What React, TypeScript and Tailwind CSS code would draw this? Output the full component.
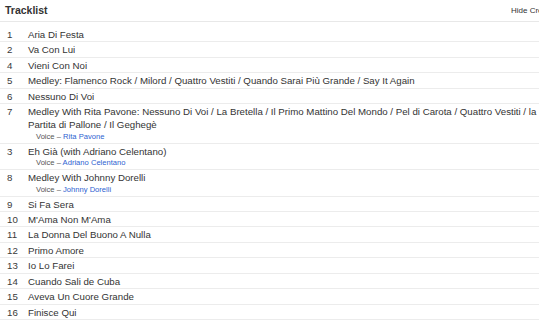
import React from "react";

type Track = { n: string; title: string; voice?: string };

const tracks: Track[] = [
  { n: "1", title: "Aria Di Festa" },
  { n: "2", title: "Va Con Lui" },
  { n: "4", title: "Vieni Con Noi" },
  { n: "5", title: "Medley: Flamenco Rock / Milord / Quattro Vestiti / Quando Sarai Più Grande / Say It Again" },
  { n: "6", title: "Nessuno Di Voi" },
  {
    n: "7",
    title:
      "Medley With Rita Pavone: Nessuno Di Voi / La Bretella / Il Primo Mattino Del Mondo / Pel di Carota / Quattro Vestiti / la Partita di Pallone / Il Geghegè",
    voice: "Rita Pavone",
  },
  { n: "3", title: "Eh Già (with Adriano Celentano)", voice: "Adriano Celentano" },
  { n: "8", title: "Medley With Johnny Dorelli", voice: "Johnny Dorelli" },
  { n: "9", title: "Si Fa Sera" },
  { n: "10", title: "M'Ama Non M'Ama" },
  { n: "11", title: "La Donna Del Buono A Nulla" },
  { n: "12", title: "Primo Amore" },
  { n: "13", title: "Io Lo Farei" },
  { n: "14", title: "Cuando Sali de Cuba" },
  { n: "15", title: "Aveva Un Cuore Grande" },
  { n: "16", title: "Finisce Qui" },
];

export default function App() {
  return (
    <div
      className="w-[539px] h-[330px] overflow-hidden bg-white text-[#333]"
      style={{ fontFamily: '"Liberation Sans", Arial, sans-serif' }}
    >
      <div className="flex items-end h-[22px] border-b border-[#e8e8e8] pl-[5px]">
        <div className="flex-1 text-[10.5px] font-bold leading-[13px] pb-[4px]">Tracklist</div>
        <div className="w-[28px] overflow-hidden whitespace-nowrap text-[8px] leading-[10px] pb-[5px]">
          Hide Credits
        </div>
      </div>
      <div className="pt-[5px]">
        {tracks.map((t, i) => (
          <div
            key={i}
            className={`flex border-b border-[#ececec] pt-[1px] pl-[7px] pr-[2px] ${t.voice ? "pb-[1px]" : ""}`}
          >
            <div className="w-[21px] shrink-0 text-[9.7px] leading-[13.4px] text-[#3a3a3a]">{t.n}</div>
            <div className="flex-1 min-w-0">
              <div className="text-[9.7px] leading-[13.4px] text-[#333]">{t.title}</div>
              {t.voice && (
                <div className="pl-[8px] text-[7.6px] leading-[10px] text-[#555]">
                  Voice – <span className="text-[#2e5fd1]">{t.voice}</span>
                </div>
              )}
            </div>
          </div>
        ))}
      </div>
    </div>
  );
}
